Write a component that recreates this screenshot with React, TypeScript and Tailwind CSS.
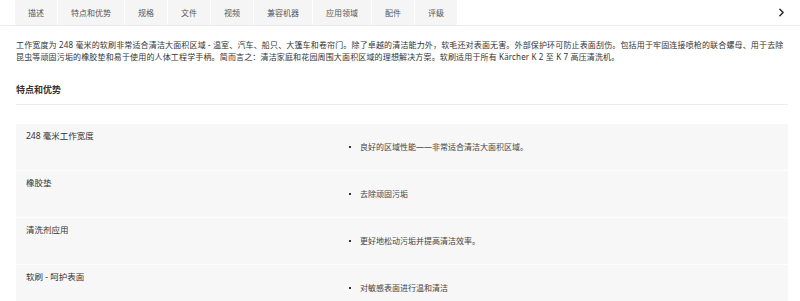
import { ChevronRight } from "lucide-react";

const tabs = ["描述", "特点和优势", "规格", "文件", "视频", "兼容机器", "应用领域", "配件", "评级"];

type Feature = {
  label: string,
  benefit: string
}

const features: Feature[] = [
  { label: "248 毫米工作宽度", benefit: "良好的区域性能——非常适合清洁大面积区域。" },
  { label: "橡胶垫", benefit: "去除顽固污垢" },
  { label: "清洗剂应用", benefit: "更好地松动污垢并提高清洁效率。" },
  { label: "软刷 - 呵护表面", benefit: "对敏感表面进行温和清洁" },
];

function FeatureRow({ label, benefit }: Feature) {
  return (
    <div className="grid grid-cols-[330px_1fr] h-[47px] bg-[#f7f7f7] border-b border-[#fdfdfd]">
      <div className="pl-[10px] pt-[6px] leading-[12px] text-[8.5px] text-[#333]">{label}</div>
      <div className="pt-[17px] leading-[12px]">
        <div className="flex items-center gap-[9px] pl-[3px]">
          <span className="w-[2px] h-[2px] bg-[#333]" />
          <span className="text-[8px] text-[#444]">{benefit}</span>
        </div>
      </div>
    </div>
  );
}

export default function App() {
  return (
    <div
      className="w-[800px] h-[301px] overflow-hidden bg-white text-[#333]"
      style={{ fontFamily: '"Noto Sans", "Noto Sans CJK SC", sans-serif' }}
    >
      {/* Tabs */}
      <div className="flex items-stretch h-[26px] border-b border-[#ebebeb] pl-[15px] pr-[12px]">
        <div className="flex gap-[1px]">
          {tabs.map((tab) => (
            <div key={tab} className="flex items-center px-[13px] bg-[#f5f5f5] text-[8px] text-[#555]">
              {tab}
            </div>
          ))}
        </div>
        <div className="ml-auto flex items-center">
          <ChevronRight size={13} strokeWidth={2.6} className="text-[#222]" />
        </div>
      </div>

      <div className="pl-[16px] pr-[12px]">
        <p className="mt-[13px] text-[8px] leading-[12px] tracking-[0.15px] text-[#333]">
          工作宽度为 248 毫米的软刷非常适合清洁大面积区域 - 温室、汽车、船只、大篷车和卷帘门。除了卓越的清洁能力外，软毛还对表面无害。外部保护环可防止表面刮伤。包括用于牢固连接喷枪的联合螺母、用于去除昆虫等顽固污垢的橡胶垫和易于使用的人体工程学手柄。简而言之：清洁家庭和花园周围大面积区域的理想解决方案。软刷适用于所有 Kärcher K 2 至 K 7 高压清洗机。
        </p>

        <h3 className="mt-[21px] pb-[8px] border-b border-[#ececec] text-[9px] leading-[12px] font-bold text-[#333]">
          特点和优势
        </h3>

        <div className="mt-[19px]">
          {features.map((f) => (
            <FeatureRow key={f.label} {...f} />
          ))}
        </div>
      </div>
    </div>
  );
}
